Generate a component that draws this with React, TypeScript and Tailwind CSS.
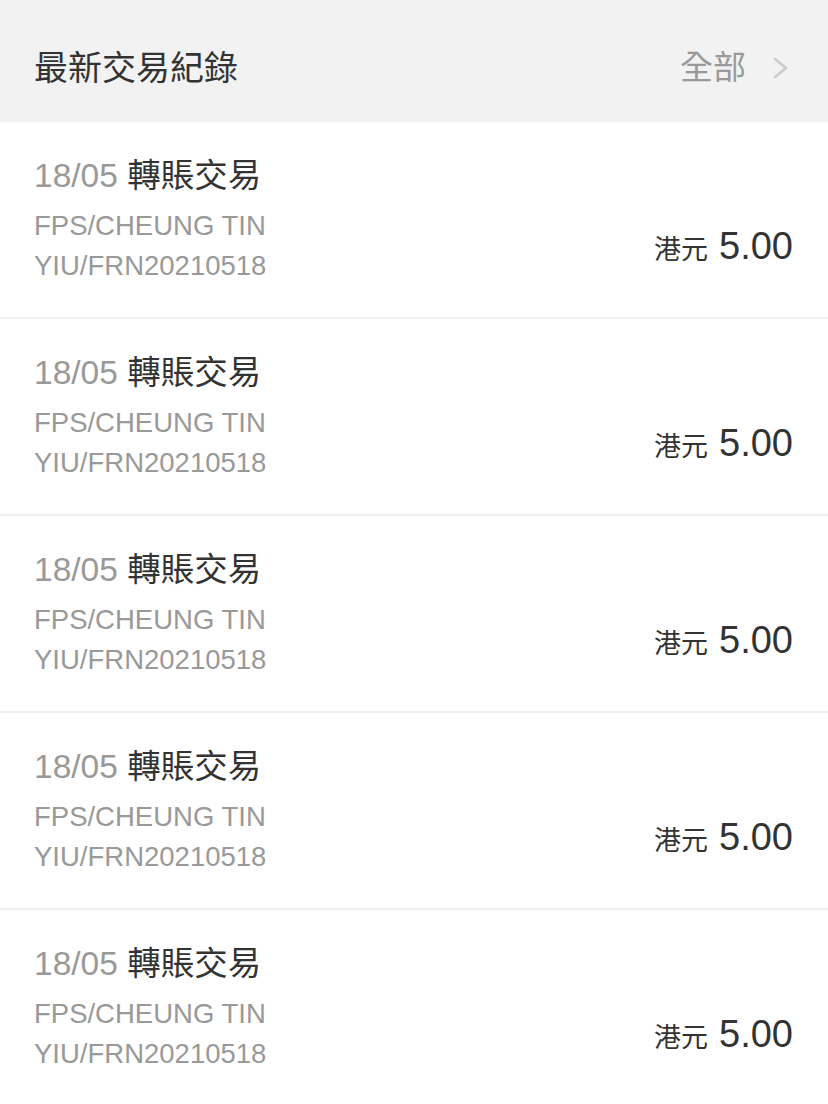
import React from "react";

const font = { fontFamily: '"Liberation Sans", "Noto Sans CJK TC", sans-serif' };

function Row() {
  return (
    <div className="bg-white border-b-2 border-[#efefef] pl-[34px] pr-[35px] pt-[32px] pb-[31px]">
      <div className="text-[33.5px] leading-[44px] whitespace-nowrap">
        <span className="text-[#999999]">18/05</span>
        <span className="text-[#333333]"> 轉賬交易</span>
      </div>
      <div className="mt-[8px] flex items-center justify-between">
        <div className="w-[260px] text-[27.5px] leading-[40px] text-[#999999]">
          FPS/CHEUNG TIN YIU/FRN20210518
        </div>
        <div className="flex items-baseline gap-[11px] text-[#333333] whitespace-nowrap">
          <span className="text-[27px]">港元</span>
          <span className="text-[38px]">5.00</span>
        </div>
      </div>
    </div>
  );
}

export default function App() {
  return (
    <div className="min-h-[1104px] w-[828px] bg-white" style={font}>
      <div className="h-[122px] bg-[#f2f2f2] flex items-center justify-between pl-[34px] pr-[38px] pt-[14px]">
        <div className="text-[34px] text-[#333333]">最新交易紀錄</div>
        <div className="flex items-center gap-[26px]">
          <span className="text-[33px] text-[#999999]">全部</span>
          <svg width="18" height="22" viewBox="0 0 18 22" fill="none">
            <path d="M3 2 L14 11 L3 20" stroke="#cccccc" strokeWidth="2.6" strokeLinecap="round" strokeLinejoin="round" />
          </svg>
        </div>
      </div>
      <Row />
      <Row />
      <Row />
      <Row />
      <Row />
    </div>
  );
}
